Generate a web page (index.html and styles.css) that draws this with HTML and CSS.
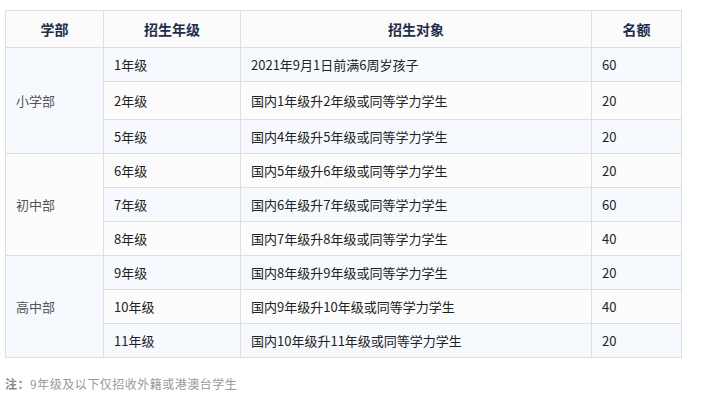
FILE: index.html
```html
<!DOCTYPE html>
<html lang="zh">
<head>
<meta charset="utf-8">
<link rel="stylesheet" href="styles.css">
</head>
<body>
<div class="page">
<table class="plan">
  <colgroup>
    <col class="c1"><col class="c2"><col class="c3"><col class="c4">
  </colgroup>
  <thead>
    <tr><th>学部</th><th>招生年级</th><th>招生对象</th><th>名额</th></tr>
  </thead>
  <tbody>
    <tr class="odd"><td rowspan="3" class="dept">小学部</td><td>1年级</td><td>2021年9月1日前满6周岁孩子</td><td>60</td></tr>
    <tr class="even tall"><td>2年级</td><td>国内1年级升2年级或同等学力学生</td><td>20</td></tr>
    <tr class="odd"><td>5年级</td><td>国内4年级升5年级或同等学力学生</td><td>20</td></tr>
    <tr class="even"><td rowspan="3" class="dept">初中部</td><td>6年级</td><td>国内5年级升6年级或同等学力学生</td><td>20</td></tr>
    <tr class="odd"><td>7年级</td><td>国内6年级升7年级或同等学力学生</td><td>60</td></tr>
    <tr class="even"><td>8年级</td><td>国内7年级升8年级或同等学力学生</td><td>40</td></tr>
    <tr class="odd"><td rowspan="3" class="dept">高中部</td><td>9年级</td><td>国内8年级升9年级或同等学力学生</td><td>20</td></tr>
    <tr class="even"><td>10年级</td><td>国内9年级升10年级或同等学力学生</td><td>40</td></tr>
    <tr class="odd"><td>11年级</td><td>国内10年级升11年级或同等学力学生</td><td>20</td></tr>
  </tbody>
</table>
<p class="note"><b>注：</b>9年级及以下仅招收外籍或港澳台学生</p>
</div>
</body>
</html>
```

FILE: styles.css
```css
html, body {
  margin: 0;
  padding: 0;
  background: #fff;
}
body {
  font-family: "Noto Sans CJK SC", "Noto Sans", sans-serif;
  font-size: 13px;
  color: #222;
}
.page {
  padding: 10px 0 0 5px;
}
.plan {
  border-collapse: collapse;
  width: 677px;
  table-layout: fixed;
}
.c1 { width: 98px; }
.c2 { width: 137px; }
.c3 { width: 351px; }
.c4 { width: 90px; }
.plan th, .plan td {
  border: 1px solid #dedede;
  padding: 0 10px;
  line-height: 18px;
  text-align: left;
}
.plan th {
  height: 36px;
  background: #fbfbfb;
  text-align: center;
  font-weight: bold;
  color: #1e2d4a;
  font-size: 14px;
}
.plan td {
  height: 33px;
}
.plan tr.tall td {
  height: 37px;
}
.plan tr.odd td { background: #f6faff; }
.plan tr.even td { background: #fcfcfc; }
.plan td.dept {
  color: #555;
}
.note {
  margin: 17px 0 0 0;
  font-size: 12px;
  letter-spacing: 0.5px;
  color: #999;
}
.note b {
  font-weight: bold;
  color: #8a8a8a;
}
```
